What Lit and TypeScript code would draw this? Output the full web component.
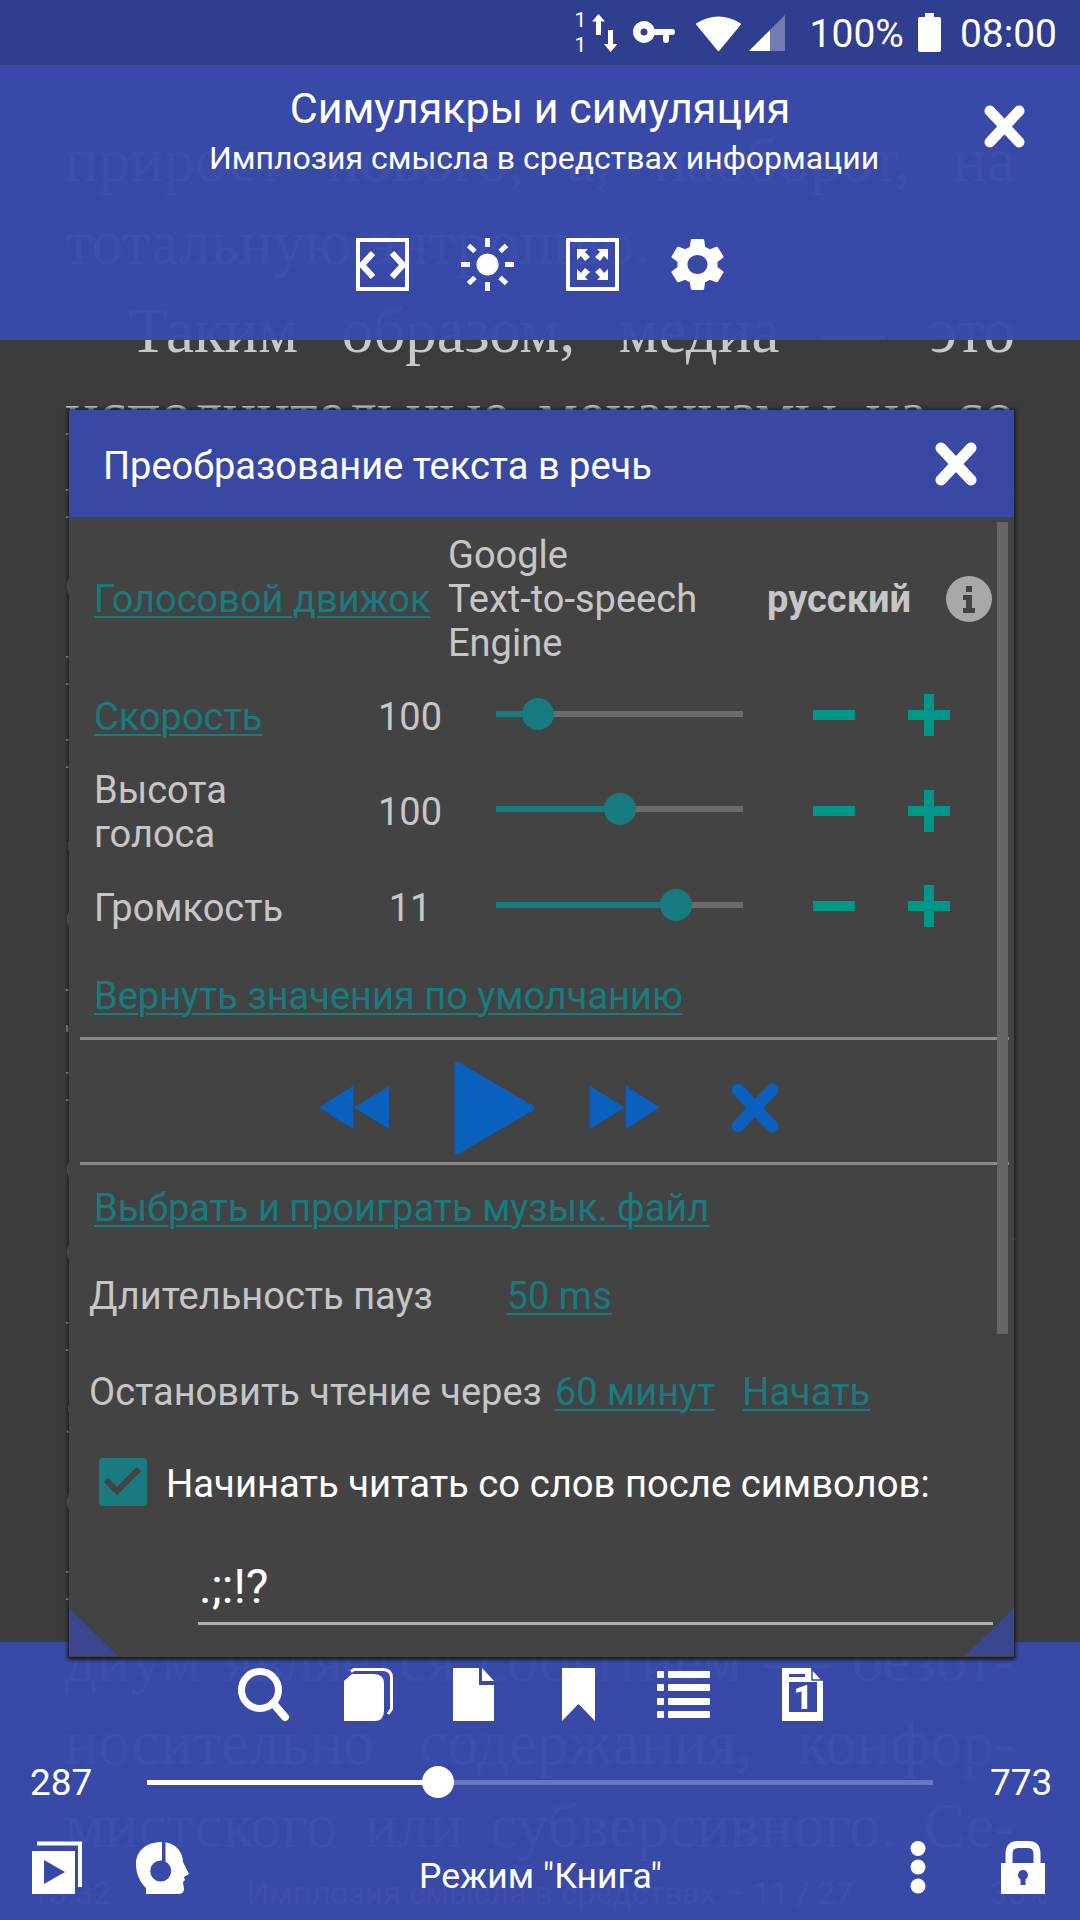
import { LitElement, html, css, svg } from 'lit';
import { customElement } from 'lit/decorators.js';

const PAGE_LINES = [
  'прирост нового, а, наоборот, на',
  'тотальную энтропию.',
  'Таким образом, медиа — это',
  'исполнительные механизмы на со',
  'циальное, которые не порождают',
  'его, а наоборот, взрывают массы',
  'изнутри, и это происходит всегда',
  'в масштабе всей системы связи.',
  'Здесь смысл разрушается и сам',
  'себя отменяет в бесконечной сим',
  'уляции, где нет ни начала, ни',
  'конца, только знаки и коды без',
  'опоры в реальном, и потому все',
  'события теперь равны друг другу',
  'в своей прозрачности для взгляда',
  'зрителя, а сообщение становится',
  'самим посредником, и так порой',
  'происходит снова и снова, и ме',
  'диум является событием — безот-',
  'носительно содержания, конфор-',
  'мистского или субверсивного. Се-',
];

const closeIcon = (w: number, h: number) => html`
  <svg width=${w} height=${h} viewBox="0 0 44 44">
    <path d="M7 6 L37 38 M37 6 L7 38" fill="none" stroke="currentColor" stroke-width="11" stroke-linecap="round" />
  </svg>
`;

const icons = {
  arrows: svg`<path d="M6.5 0 13 7.5H9V21H4V7.5H0Z M16 16h5v14h4.5L18.5 38 12 30h4Z" fill="#fff" />`,
  key: svg`<path fill-rule="evenodd" fill="#fff" d="M11 0a11 11 0 0 1 10.5 8H39q3 0 3 3t-3 3h-3v5q0 3-3 3t-3-3v-5h-8.500A11 11 0 1 1 11 0Zm0 7.500a3.500 3.500 0 1 0 0 7 3.500 3.500 0 0 0 0-7Z" />`,
  wifi: svg`<path d="M2 10Q23.500-3 45 10L23.500 36Z" fill="#fff" stroke="#fff" stroke-width="2" stroke-linejoin="round" />`,
  signal: svg`<path d="M0 36 36 0V36Z" fill="#fff" fill-opacity=".32" /><path d="M0 36 21 15V36Z" fill="#fff" />`,
  battery: svg`<path d="M7 0H16V4H21Q23 4 23 6V37Q23 39 21 39H2Q0 39 0 37V6Q0 4 2 4H7Z" fill="#fff" />`,
  width: svg`
    <rect x="2" y="2" width="49" height="49" fill="none" stroke="#fff" stroke-width="4" />
    <path d="M17 15 6 27 17 39M36 15 47 27 36 39" fill="none" stroke="#fff" stroke-width="6" />`,
  sun: svg`
    <circle cx="26.500" cy="26.500" r="11" fill="#fff" />
    <path d="M26.500 0V9M26.500 44V53M0 26.500H9M44 26.500H53M7.500 7.500 14 13.500M45.500 7.500 39 13.500M7.500 45.500 14 39.500M45.500 45.500 39 39.500" stroke="#fff" stroke-width="5" />`,
  expand: svg`
    <rect x="2" y="2" width="49" height="49" fill="none" stroke="#fff" stroke-width="4" />
    <path fill="#fff" d="M11 11H22L19 14 24 19 19 23 15 18 11 22ZM42 11H31L34 14 29 19 34 23 38 18 42 22ZM11 42H22L19 39 24 34 19 30 15 35 11 31ZM42 42H31L34 39 29 34 34 30 38 35 42 31Z" />`,
  gear: svg`<g transform="scale(2.789 2.65) translate(-2.500 -2)"><path fill="#fff" d="M19.140 12.940c.04-.3.06-.61.06-.94 0-.32-.02-.64-.07-.94l2.030-1.580c.18-.14.23-.41.12-.61l-1.920-3.320c-.12-.22-.37-.29-.59-.22l-2.390.96c-.5-.38-1.030-.7-1.620-.94l-.36-2.540c-.04-.24-.24-.41-.48-.41h-3.840c-.24 0-.43.17-.47.41l-.36 2.540c-.59.24-1.130.57-1.620.94l-2.390-.96c-.22-.08-.47 0-.59.22L2.740 8.870c-.12.21-.08.47.12.61l2.030 1.580c-.05.3-.09.63-.09.94s.02.64.07.94l-2.030 1.580c-.18.14-.23.41-.12.61l1.920 3.320c.12.22.37.29.59.22l2.390-.96c.5.38 1.030.7 1.620.94l.36 2.540c.05.24.24.41.48.41h3.840c.24 0 .44-.17.47-.41l.36-2.540c.59-.24 1.130-.56 1.620-.94l2.390.96c.22.08.47 0 .59-.22l1.920-3.320c.12-.22.07-.47-.12-.61l-2.010-1.580zM12 15.600c-1.980 0-3.600-1.620-3.600-3.600s1.620-3.600 3.600-3.600 3.600 1.620 3.600 3.600-1.620 3.600-3.600 3.600z" /></g>`,
  info: svg`
    <circle cx="23" cy="23" r="23" fill="#a8a8a8" />
    <path fill="#434343" d="M20 10h6v6h-6ZM17 19h9v13h3v5H17v-5h3v-8h-3Z" />`,
  rewind: svg`<path d="M35 0V43L1 21.500ZM71 0V43L36 21.500Z" fill="#0a60bd" />`,
  play: svg`<path d="M4 2 79 46 4 90Z" fill="#0a60bd" stroke="#0a60bd" stroke-width="5" stroke-linejoin="round" />`,
  forward: svg`<path d="M0 0 35 21.500 0 43ZM36 0 70 21.500 36 43Z" fill="#0a60bd" />`,
  check: svg`
    <rect width="48" height="48" rx="4" fill="#197a80" />
    <path d="M7 22 18 33 40 11" fill="none" stroke="#434343" stroke-width="6" />`,
  search: svg`
    <circle cx="22" cy="22" r="18.500" fill="none" stroke="#fff" stroke-width="7" />
    <path d="M35 35 47 49" stroke="#fff" stroke-width="8" stroke-linecap="round" />`,
  book: svg`
    <path d="M0 13 8 6H30Q40 6 40 16V43Q40 53 30 53H0Z" fill="#fff" />
    <path d="M7 3.500 10 1.500H39Q47.500 1.500 47.500 10V41L44 46" fill="none" stroke="#fff" stroke-width="3" />`,
  page: svg`<path d="M0 0H26V17H41V53H0ZM29 0 41 13H29Z" fill="#fff" />`,
  bookmark: svg`<path d="M0 0H33V53L16.500 36 0 53Z" fill="#fff" />`,
  list: svg`
    <g fill="#fff">
      <rect y="3" width="7" height="7" rx="1" /><rect x="11" y="3" width="42" height="7" rx="1" />
      <rect y="16" width="7" height="7" rx="1" /><rect x="11" y="16" width="42" height="7" rx="1" />
      <rect y="30" width="7" height="7" rx="1" /><rect x="11" y="30" width="42" height="7" rx="1" />
      <rect y="43" width="7" height="7" rx="1" /><rect x="11" y="43" width="42" height="7" rx="1" />
    </g>`,
  pageOne: svg`
    <path d="M0 0H29L41 13V53H0Z" fill="#fff" />
    <path d="M30 1 40 12H30Z" fill="#fff" stroke="#3949a8" stroke-width="1.500" />
    <rect x="7" y="6" width="16" height="3" fill="#3949a8" />
    <rect x="7" y="14" width="28" height="30" fill="#3949a8" />
    <text x="21" y="41" text-anchor="middle" fill="#fff" font-family="Roboto, sans-serif" font-weight="900" font-size="33">1</text>`,
  playStack: svg`
    <path d="M5 1.500H48V45" fill="none" stroke="#fff" stroke-width="4" />
    <path d="M0 9H43V52H0ZM12 18V42L33 30Z" fill-rule="evenodd" fill="#fff" />`,
  head: svg`
    <path fill="#fff" fill-rule="evenodd" d="M26 0C38 0 47 9 47 20L53 32 48 35 49 38 47 40 48 47Q48 52 42 52H10V46C4 40 0 32 0 22 0 9 10 0 26 0ZM24.700 18.500A10.500 10.500 0 1 0 24.700 39.500 10.500 10.500 0 1 0 24.700 18.500Z" />
    <rect x="26" y="-1" width="3.500" height="21" fill="#3949a8" />`,
  dots: svg`<circle cx="8" cy="7.500" r="7.500" fill="#fff" /><circle cx="8" cy="26" r="7.500" fill="#fff" /><circle cx="8" cy="45" r="7.500" fill="#fff" />`,
  lock: svg`
    <path d="M8 24V13Q8 3.500 17 3.500H27Q36 3.500 36 13V24" fill="none" stroke="#fff" stroke-width="7" />
    <path fill="#fff" fill-rule="evenodd" d="M0 22H44V53H0ZM22 29a5 5 0 0 0-2.500 9.300V44h5v-5.700A5 5 0 0 0 22 29Z" />`,
};

const icon = (name: keyof typeof icons, w: number, h: number) => html`
  <svg width=${w} height=${h} viewBox="0 0 ${w} ${h}">${icons[name]}</svg>
`;

@customElement('app-root')
export class AppRoot extends LitElement {
  static styles = css`
    :host {
      display: block;
      position: relative;
      width: 1080px;
      height: 1920px;
      overflow: hidden;
      background: #3c3c3c;
      font-family: Roboto, 'Liberation Sans', sans-serif;
      font-size: 38px;
      color: #c6c6c6;
    }

    svg {
      display: block;
      flex: none;
      overflow: visible;
    }

    /* book page behind the panels */
    .page {
      padding: 119px 65px 0;
      font: 63px/83.25px 'Liberation Serif', serif;
      color: #c8c8c8;
    }

    .page-line {
      text-align: justify;
      text-align-last: justify;
      white-space: nowrap;
    }

    .page-line.short {
      text-align-last: left;
    }

    .page-line.indent {
      margin-top: 4px;
      padding-left: 64px;
    }

    .page-line.tight {
      margin-top: -3px;
    }

    .page-foot {
      display: flex;
      justify-content: space-between;
      margin: 5px -34px 0;
      font: 32px/40px Roboto, sans-serif;
    }

    /* status bar and top panel */
    .top {
      position: absolute;
      inset: 0 0 auto 0;
      color: #fff;
    }

    .status {
      display: flex;
      align-items: center;
      height: 65px;
      padding-right: 23px;
      background: #303e8f;
      justify-content: flex-end;
      box-sizing: border-box;
    }

    .sim {
      display: flex;
      flex-direction: column;
      gap: 7px;
      width: 8px;
      margin-right: 9px;
      font-size: 21px;
      line-height: 18px;
      text-align: center;
    }

    .status-text {
      padding-top: 4px;
      font-size: 39px;
      line-height: 61px;
    }

    .title-panel {
      position: relative;
      height: 275px;
      background: rgba(57, 73, 170, 0.97);
      box-sizing: border-box;
      padding-top: 18px;
      text-align: center;
    }

    .title-panel h1 {
      margin: 0;
      font-size: 43px;
      font-weight: 400;
      line-height: 50px;
    }

    .title-panel h2 {
      margin: 3px 0 0;
      padding-left: 8px;
      font-size: 32px;
      font-weight: 400;
      line-height: 44px;
    }

    .panel-close {
      position: absolute;
      left: 983px;
      top: 40px;
    }

    .tools {
      display: flex;
      justify-content: center;
      gap: 52px;
      margin-top: 58px;
    }

    /* bottom panel */
    .bottom {
      position: absolute;
      left: 0;
      right: 0;
      bottom: 0;
      height: 278px;
      box-sizing: border-box;
      padding-top: 26px;
      background: rgba(57, 73, 170, 0.97);
      color: #fff;
    }

    .bottom-icons {
      display: flex;
      align-items: flex-start;
      padding-left: 238px;
    }

    .seek {
      display: grid;
      grid-template-columns: 117px 786px 1fr;
      align-items: center;
      height: 44px;
      margin-top: 39px;
      padding-left: 30px;
      font-size: 37px;
    }

    .seek span:last-child {
      padding-left: 57px;
    }

    .seek-track {
      position: relative;
      height: 5px;
      background: rgba(255, 255, 255, 0.25);
    }

    .seek-fill {
      height: 100%;
      background: #fff;
    }

    .seek-thumb {
      position: absolute;
      top: -14px;
      width: 32px;
      height: 32px;
      margin-left: -16px;
      border-radius: 50%;
      background: #fff;
    }

    .mode-row {
      display: flex;
      align-items: flex-end;
      margin-top: 37px;
      padding-left: 32px;
    }

    .mode-label {
      width: 242px;
      margin-left: 230px;
      margin-right: 249px;
      white-space: nowrap;
      font-size: 35.500px;
      line-height: 36px;
      text-align: center;
    }

    /* dialog */
    .dialog {
      position: absolute;
      left: 69px;
      top: 410px;
      width: 945px;
      height: 1247px;
      background: #434343;
      box-shadow: 0 0 3px 2px rgba(30, 30, 30, 0.8), 0 3px 3px rgba(30, 30, 30, 0.7);
      overflow: hidden;
    }

    .dialog-head {
      display: flex;
      align-items: center;
      justify-content: space-between;
      height: 107px;
      padding: 0 36px 0 34px;
      background: #3949a3;
      color: #fff;
    }

    .dialog-title {
      padding-top: 4px;
    }

    .scroll-thumb {
      position: absolute;
      left: 928px;
      top: 112px;
      width: 11px;
      height: 812px;
      background: #666;
    }

    .corner {
      position: absolute;
      bottom: 1px;
      width: 49px;
      height: 48px;
      background: #3b4690;
    }

    .corner.left {
      left: 0;
      clip-path: polygon(0 0, 100% 100%, 0 100%);
    }

    .corner.right {
      right: 0;
      clip-path: polygon(100% 0, 100% 100%, 0 100%);
    }

    .link {
      color: #177b80;
      text-decoration: underline;
      text-decoration-thickness: 2px;
      text-underline-offset: 4px;
    }

    .engine {
      display: grid;
      grid-template-columns: 354px 319px 179px auto;
      align-items: center;
      height: 132px;
      margin: 16px 0 4px;
      padding-left: 25px;
      line-height: 44px;
    }

    .engine b {
      font-weight: 700;
    }

    .setting {
      display: grid;
      grid-template-columns: 258px 144px 247px 112px 95px;
      align-items: center;
      height: 95.500px;
      padding-left: 25px;
      line-height: 44px;
    }

    .setting .value {
      padding-right: 28px;
      text-align: center;
    }

    .slider {
      position: relative;
      height: 6px;
      margin-bottom: 6px;
      background: #6b6b6b;
    }

    .slider-fill {
      height: 100%;
      background: #177b80;
    }

    .slider-thumb {
      position: absolute;
      top: -13px;
      width: 32px;
      height: 32px;
      margin-left: -16px;
      border-radius: 50%;
      background: #177b80;
    }

    .step {
      justify-self: end;
      margin-bottom: 3px;
    }

    .line-row {
      height: 44px;
      padding-left: 25px;
      line-height: 44px;
      white-space: nowrap;
    }

    .rule {
      height: 3px;
      margin: 0 5px 0 11px;
      background: #8a8a8a;
    }

    .media {
      display: flex;
      align-items: center;
      box-sizing: border-box;
      height: 122px;
      padding: 14px 0 0 249px;
    }

    .pause-row {
      display: flex;
      height: 44px;
      padding-left: 20px;
      line-height: 44px;
      white-space: nowrap;
    }

    .check-row {
      display: flex;
      align-items: center;
      gap: 19px;
      height: 48px;
      margin-top: 44px;
      padding-left: 30px;
      color: #fff;
      white-space: nowrap;
    }

    .check-label {
      padding-top: 4px;
      font-size: 38.250px;
    }

    .symbols {
      height: 65px;
      margin: 45px 21px 0 129px;
      padding: 6px 0 0 1px;
      border-bottom: 3px solid #b0b0b0;
      color: #fff;
      font-size: 48px;
      line-height: 60px;
    }
  `;

  slider(percent: number) {
    return html`
      <div class="slider">
        <div class="slider-fill" style="width: ${percent}%"></div>
        <div class="slider-thumb" style="left: ${percent}%"></div>
      </div>
    `;
  }

  steppers() {
    return html`
      <svg class="step" width="42" height="42" viewBox="0 0 42 42">
        <rect y="16" width="42" height="10" rx="1" fill="#009688" />
      </svg>
      <svg class="step" width="42" height="42" viewBox="0 0 42 42">
        <path d="M0 16H16V0H26V16H42V26H26V42H16V26H0Z" fill="#009688" />
      </svg>
    `;
  }

  render() {
    return html`
      <div class="page">
        ${PAGE_LINES.map((line, i) => html`
          <div class="page-line ${i === 1 ? 'short' : ''} ${i === 2 ? 'indent' : ''} ${i === 18 ? 'tight' : ''}">${line}</div>
        `)}
        <div class="page-foot">
          <span>13:32</span>
          <span>Имплозия смысла в средствах – 11 / 27</span>
          <span>35%</span>
        </div>
      </div>

      <div class="top">
        <div class="status">
          <div class="sim"><span>1</span><span>1</span></div>
          ${icon('arrows', 26, 38)}
          <span style="width: 15px"></span>
          ${icon('key', 42, 23)}
          <span style="width: 20px"></span>
          ${icon('wifi', 47, 37)}
          <span style="width: 7px"></span>
          ${icon('signal', 36, 36)}
          <span style="width: 25px"></span>
          <span class="status-text">100%</span>
          <span style="width: 14px"></span>
          ${icon('battery', 23, 39)}
          <span style="width: 19px"></span>
          <span class="status-text">08:00</span>
        </div>
        <div class="title-panel">
          <h1>Симулякры и симуляция</h1>
          <h2>Имплозия смысла в средствах информации</h2>
          <div class="panel-close">${closeIcon(43, 43)}</div>
          <div class="tools">
            ${icon('width', 53, 53)}
            ${icon('sun', 53, 53)}
            ${icon('expand', 53, 53)}
            ${icon('gear', 53, 53)}
          </div>
        </div>
      </div>

      <div class="bottom">
        <div class="bottom-icons">
          ${icon('search', 52, 53)}
          <span style="width: 54px"></span>
          ${icon('book', 49, 53)}
          <span style="width: 60px"></span>
          ${icon('page', 41, 53)}
          <span style="width: 68px"></span>
          ${icon('bookmark', 33, 53)}
          <span style="width: 62px"></span>
          ${icon('list', 53, 53)}
          <span style="width: 72px"></span>
          ${icon('pageOne', 41, 53)}
        </div>
        <div class="seek">
          <span>287</span>
          <div class="seek-track">
            <div class="seek-fill" style="width: 37%"></div>
            <div class="seek-thumb" style="left: 37%"></div>
          </div>
          <span>773</span>
        </div>
        <div class="mode-row">
          ${icon('playStack', 51, 52)}
          <span style="width: 53px"></span>
          ${icon('head', 53, 52)}
          <div class="mode-label">Режим "Книга"</div>
          ${icon('dots', 16, 53)}
          <span style="width: 75px"></span>
          ${icon('lock', 44, 53)}
        </div>
      </div>

      <div class="dialog">
        <div class="dialog-head">
          <span class="dialog-title">Преобразование текста в речь</span>
          ${closeIcon(44, 44)}
        </div>

        <div class="engine">
          <span class="link">Голосовой движок</span>
          <span>Google<br />Text-to-speech<br />Engine</span>
          <b>русский</b>
          ${icon('info', 46, 46)}
        </div>

        <div class="setting">
          <span class="link">Скорость</span>
          <span class="value">100</span>
          ${this.slider(17)}
          ${this.steppers()}
        </div>
        <div class="setting">
          <span>Высота<br />голоса</span>
          <span class="value">100</span>
          ${this.slider(50)}
          ${this.steppers()}
        </div>
        <div class="setting">
          <span>Громкость</span>
          <span class="value">11</span>
          ${this.slider(73)}
          ${this.steppers()}
        </div>

        <div class="line-row" style="margin-top: 18px"><span class="link">Вернуть значения по умолчанию</span></div>
        <div class="rule" style="margin-top: 19px"></div>

        <div class="media">
          ${icon('rewind', 71, 43)}
          <span style="width: 64px"></span>
          ${icon('play', 81, 92)}
          <span style="width: 56px"></span>
          ${icon('forward', 70, 43)}
          <span style="width: 70px"></span>
          <span style="color: #0a60bd">${closeIcon(50, 50)}</span>
        </div>
        <div class="rule"></div>

        <div class="line-row" style="margin-top: 21px"><span class="link">Выбрать и проиграть музык. файл</span></div>

        <div class="pause-row" style="margin-top: 44px">
          <span>Длительность пауз</span>
          <span class="link" style="margin-left: 74px">50 ms</span>
        </div>
        <div class="pause-row" style="margin-top: 52px">
          <span>Остановить чтение через</span>
          <span class="link" style="margin-left: 13px">60 минут</span>
          <span class="link" style="margin-left: 27px">Начать</span>
        </div>

        <div class="check-row">
          ${icon('check', 48, 48)}
          <span class="check-label">Начинать читать со слов после символов:</span>
        </div>
        <div class="symbols">.;:!?</div>

        <div class="scroll-thumb"></div>
        <div class="corner left"></div>
        <div class="corner right"></div>
      </div>
    `;
  }
}
